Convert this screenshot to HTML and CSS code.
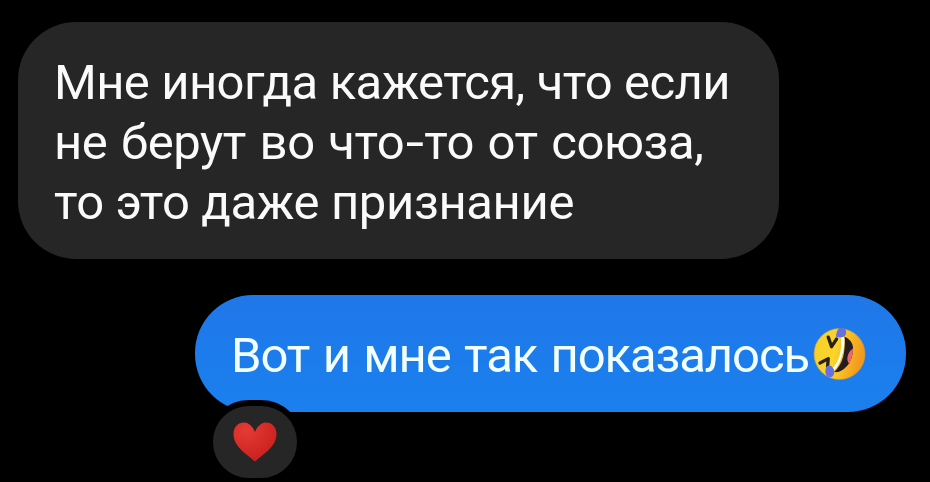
FILE: index.html
```
<!DOCTYPE html>
<html lang="ru">
<head>
    <meta charset="UTF-8">
    <title>Чат</title>
    <meta name="viewport" content="width=device-width, initial-scale=1.0">
    <link rel="stylesheet" href="styles.css">
</head>
<body>
    <div class="chat">
        <!-- Incoming message -->
        <div class="message incoming">
            <span class="line line-1">Мне иногда кажется, что если</span>
            <span class="line line-2">не берут во что<span class="dash">-</span>то от союза,</span>
            <span class="line line-3">то это даже признание</span>
        </div>

        <!-- Outgoing message -->
        <div class="message outgoing">
            <span class="line line-4">Вот и мне так показалось</span>
            <svg class="emoji" viewBox="40 50 160 162">
                <defs>
                    <linearGradient id="face" x1="0" y1="0" x2="1" y2="0.25">
                        <stop offset="0" stop-color="#f5cf2a"/>
                        <stop offset="0.5" stop-color="#fbd42c"/>
                        <stop offset="1" stop-color="#f39a1c"/>
                    </linearGradient>
                    <clipPath id="mouth">
                        <path d="M135 78 Q158 88 161 111 Q161 148 142 168 Q124 188 103 186 Q124 166 131 139 Q138 112 135 78Z"/>
                    </clipPath>
                </defs>
                <circle cx="120" cy="131" r="77" fill="url(#face)" stroke="#c59a45" stroke-width="2"/>
                <g clip-path="url(#mouth)">
                    <rect x="90" y="60" width="90" height="140" fill="#251c20"/>
                    <ellipse cx="159" cy="138" rx="14" ry="24" transform="rotate(18 159 138)" fill="#ed6969"/>
                </g>
                <path d="M124 77 Q134 74 135 84 Q136 113 125 143 Q117 168 103 181 L98 175 Q113 160 120 136 Q128 108 124 77Z" fill="#fff"/>
                <path d="M86 80 L96 109 L111 86 M61 158 L86 145 L84 169" fill="none" stroke="#292018" stroke-width="10" stroke-linecap="round" stroke-linejoin="round"/>
                <path d="M117 54 Q130 49 138 57 Q144 70 134 78 Q122 84 109 78 Q111 62 117 54Z M80 170 Q87 163 96 168 Q108 178 102 195 Q96 205 83 199 Q73 188 80 170Z" fill="#6670df"/>
            </svg>
            <!-- Reaction -->
            <div class="reaction">
                <svg class="heart" viewBox="0 0 44 40">
                    <defs>
                        <radialGradient id="red" cx="0.3" cy="0.2" r="0.8">
                            <stop offset="0" stop-color="#e43b34"/>
                            <stop offset="1" stop-color="#cb211e"/>
                        </radialGradient>
                    </defs>
                    <path d="M22 10 C19 3 15 0.5 11 0.5 C5 0.5 0.5 5 0.5 12 C0.5 24 12 31 22 39.5 C32 31 43.5 24 43.5 12 C43.5 5 39 0.5 33 0.5 C29 0.5 25 3 22 10Z" fill="url(#red)"/>
                </svg>
            </div>
        </div>
    </div>
</body>
</html>
```
FILE: styles.css
```
* {
    box-sizing: border-box;
}
body {
    margin: 0;
    background: #000;
    font-family: 'Roboto', sans-serif;
    overflow: hidden;
}
.chat {
    height: 482px;
    padding: 22px 24px 0 18px;
    display: flex;
    flex-direction: column;
    gap: 36px;
}
.message {
    color: #fafafa;
    font-size: 49px;
    line-height: 60px;
    border-radius: 58px;
}
.incoming {
    width: 761px;
    height: 237px;
    padding: 31px 36px;
    background: #262626;
}
.line {
    display: block;
    width: max-content;
    white-space: nowrap;
}
.line-1 {
    letter-spacing: -0.6px;
    word-spacing: 0.5px;
}
.line-2 {
    letter-spacing: -0.45px;
    word-spacing: 2px;
}
.line-3 {
    letter-spacing: -0.36px;
}
.line-4 {
    letter-spacing: -1.1px;
    word-spacing: 2.4px;
    padding-top: 4px;
}
.dash {
    display: inline-block;
    margin: 0 3px 0 4px;
    transform: scaleX(1.35);
}
.outgoing {
    position: relative;
    align-self: flex-end;
    display: flex;
    align-items: center;
    justify-content: space-between;
    width: 711px;
    height: 117px;
    padding: 0 40px 0 36px;
    background: linear-gradient(#2077e8, #1a80ee);
    color: #f2ffff;
}
.emoji {
    width: 53px;
    height: 54px;
    flex-shrink: 0;
}
.reaction {
    position: absolute;
    left: 12px;
    top: 105px;
    width: 96px;
    height: 84px;
    display: flex;
    align-items: center;
    justify-content: center;
    background: #262626;
    border: 6px solid #000;
    border-radius: 42px;
}
.heart {
    width: 44px;
    height: 40px;
}
```
